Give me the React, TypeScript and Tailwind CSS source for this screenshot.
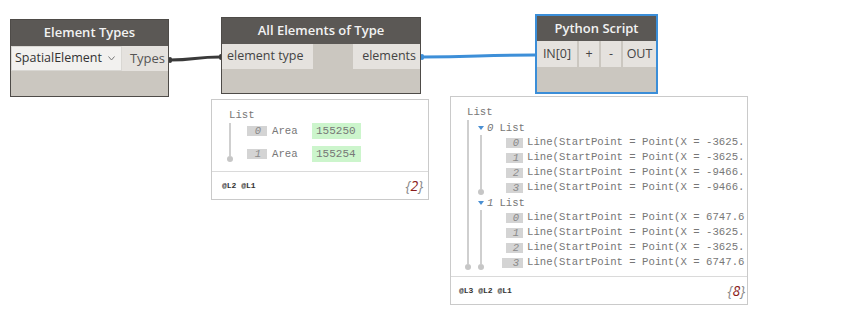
import React from "react";

const mono = { fontFamily: '"Liberation Mono", "DejaVu Sans Mono", monospace' };
const sans = { fontFamily: '"Open Sans", "Noto Sans", sans-serif' };

function Dot() {
  return <div className="w-[6px] h-[6px] rounded-full bg-[#c6c6c6] shrink-0" />;
}

function VLine() {
  return (
    <div className="flex flex-col items-center w-[6px] shrink-0">
      <div className="w-[2px] flex-1 bg-[#cfcfcf]" />
      <Dot />
    </div>
  );
}

function Idx({ n, wide }: { n: number; wide?: boolean }) {
  return (
    <div
      className={`${wide ? "w-[21px]" : "w-[17px]"} h-[10px] bg-[#d4d4d4] text-[#8a8a8a] italic text-[10.5px] leading-[10px] text-right pr-[4px] shrink-0`}
      style={mono}
    >
      {n}
    </div>
  );
}

function Group({ n, items }: { n: number; items: string[] }) {
  return (
    <div className="flex flex-col">
      <div className="flex items-center h-[15px] text-[10.67px] text-[#777]" style={mono}>
        <svg width="6" height="4" viewBox="0 0 6 4" className="shrink-0">
          <polygon points="0,0 6,0 3,4" fill="#4a8fd2" />
        </svg>
        <span className="italic ml-[3px]">{n}</span>
        <span className="ml-[6px]">List</span>
      </div>
      <div className="flex">
        <VLine />
        <div className="flex flex-col ml-[22px]">
          {items.map((t, i) => (
            <div key={i} className="flex items-center h-[15px]">
              {i === 3 && n === 1 ? (
                <div className="-ml-[4px] flex">
                  <Idx n={i} wide />
                </div>
              ) : (
                <Idx n={i} />
              )}
              <span
                className="ml-[4px] text-[10.67px] text-[#777] whitespace-nowrap leading-[15px]"
                style={mono}
              >
                {t}
              </span>
            </div>
          ))}
        </div>
      </div>
    </div>
  );
}

export default function App() {
  return (
    <div className="relative w-[848px] h-[316px] bg-white overflow-hidden" style={sans}>
      {/* wires */}
      <svg className="absolute left-0 top-0 pointer-events-none" width="848" height="316">
        <path d="M170 60 C 195 60, 195 57, 220 57" stroke="#3a3a3a" strokeWidth="3" fill="none" />
        <rect x="168" y="57" width="4" height="6" rx="2" fill="#3a3a3a" />
        <rect x="219" y="54" width="4" height="6" rx="2" fill="#3a3a3a" />
        <path d="M422 57 C 478 57, 478 55, 535 55" stroke="#3d8fd8" strokeWidth="3" fill="none" />
        <rect x="420" y="54" width="4" height="6" rx="2" fill="#3d8fd8" />
      </svg>

      {/* Element Types */}
      <div className="absolute left-[10px] top-[19px] w-[159px] h-[78px] border border-[#4e4b48] bg-[#cbc7c0] flex flex-col">
        <div className="h-[26px] bg-[#5b5855] text-[#f2f2f2] text-[13px] font-semibold flex items-center justify-center">
          Element Types
        </div>
        <div className="h-[25px] flex">
          <div className="w-[111px] bg-[#f2f1ef] border border-[#d9d7d3] flex items-center justify-between pl-[3px] pr-[6px] text-[12.5px] text-[#333]">
            <span>SpatialElement</span>
            <svg width="7" height="5" viewBox="0 0 7 5">
              <polyline points="0.5,0.5 3.5,4 6.5,0.5" fill="none" stroke="#777" strokeWidth="1" />
            </svg>
          </div>
          <div className="flex-1 bg-[#e5e2de] flex items-center justify-end pr-[3px] text-[13px] text-[#555]">
            Types
          </div>
        </div>
      </div>

      {/* All Elements of Type */}
      <div className="absolute left-[221px] top-[17px] w-[200px] h-[77px] border border-[#4e4b48] bg-[#cbc7c0] flex flex-col">
        <div className="h-[26px] bg-[#5b5855] text-[#f2f2f2] text-[13px] font-semibold flex items-center justify-center">
          All Elements of Type
        </div>
        <div className="h-[25px] flex justify-between">
          <div className="w-[91px] bg-[#e5e2de] flex items-center pl-[5px] text-[12.5px] text-[#444]">
            element type
          </div>
          <div className="w-[67px] bg-[#e5e2de] flex items-center justify-end pr-[4px] text-[12.5px] text-[#444]">
            elements
          </div>
        </div>
      </div>

      {/* Python Script */}
      <div className="absolute left-[535px] top-[14px] w-[123px] h-[80px] border-2 border-[#3b8ed8] bg-[#cbc7c0] flex flex-col">
        <div className="h-[25px] bg-[#5b5855] text-[#f2f2f2] text-[13px] font-semibold flex items-center justify-center">
          Python Script
        </div>
        <div className="h-[26px] flex gap-[2px] text-[12.5px] text-[#444]">
          <div className="w-[40px] bg-[#e5e2de] flex items-center justify-center">IN[0]</div>
          <div className="w-[20px] bg-[#e5e2de] flex items-center justify-center">+</div>
          <div className="w-[20px] bg-[#e5e2de] flex items-center justify-center">-</div>
          <div className="flex-1 bg-[#e5e2de] flex items-center justify-center">OUT</div>
        </div>
      </div>

      {/* Preview bubble 1 */}
      <div className="absolute left-[211px] top-[99px] w-[218px] bg-white border border-[#cacaca] flex flex-col">
        <div className="h-[71px] pt-[7px] pl-[15px] flex flex-col">
          <div className="h-[16px] leading-[16px] ml-[2px] text-[10.67px] text-[#777]" style={mono}>
            List
          </div>
          <div className="flex">
            <VLine />
            <div className="flex flex-col gap-[7px] ml-[14px]">
              {[
                ["0", "155250"],
                ["1", "155254"],
              ].map(([i, v]) => (
                <div key={i} className="flex items-center h-[16px]">
                  <div
                    className="w-[20px] h-[10px] bg-[#d4d4d4] text-[#8a8a8a] italic text-[10.5px] leading-[10px] text-right pr-[6px]"
                    style={mono}
                  >
                    {i}
                  </div>
                  <div className="w-[40px] ml-[5px] text-[10.67px] text-[#777]" style={mono}>
                    Area
                  </div>
                  <div
                    className="w-[49px] h-[16px] bg-[#ccf5cc] text-[11px] leading-[16px] text-[#777] pl-[4px]"
                    style={mono}
                  >
                    {v}
                  </div>
                </div>
              ))}
            </div>
          </div>
        </div>
        <div className="h-[28px] border-t border-[#dadada] flex items-center justify-between pl-[10px] pr-[5px]">
          <span className="text-[8px] font-bold text-[#333]" style={mono}>
            @L2 @L1
          </span>
          <span className="italic text-[14px] text-[#888]">
            {"{"}
            <span className="text-[#8b1c1c]">2</span>
            {"}"}
          </span>
        </div>
      </div>

      {/* Preview bubble 2 */}
      <div className="absolute left-[450px] top-[96px] w-[298px] bg-white border border-[#cacaca] flex flex-col">
        <div className="h-[179px] pt-[8px] pl-[14px] flex flex-col">
          <div className="h-[15px] leading-[15px] ml-[2px] text-[10.67px] text-[#777]" style={mono}>
            List
          </div>
          <div className="flex">
            <VLine />
            <div className="flex flex-col ml-[7px]">
              <Group
                n={0}
                items={[
                  "Line(StartPoint = Point(X = -3625.",
                  "Line(StartPoint = Point(X = -3625.",
                  "Line(StartPoint = Point(X = -9466.",
                  "Line(StartPoint = Point(X = -9466.",
                ]}
              />
              <Group
                n={1}
                items={[
                  "Line(StartPoint = Point(X = 6747.6",
                  "Line(StartPoint = Point(X = -3625.",
                  "Line(StartPoint = Point(X = -3625.",
                  "Line(StartPoint = Point(X = 6747.6",
                ]}
              />
            </div>
          </div>
        </div>
        <div className="h-[28px] border-t border-[#dadada] flex items-center justify-between pl-[8px] pr-[2px]">
          <span className="text-[8px] font-bold text-[#333]" style={mono}>
            @L3 @L2 @L1
          </span>
          <span className="italic text-[14px] text-[#888]">
            {"{"}
            <span className="text-[#8b1c1c]">8</span>
            {"}"}
          </span>
        </div>
      </div>
    </div>
  );
}
